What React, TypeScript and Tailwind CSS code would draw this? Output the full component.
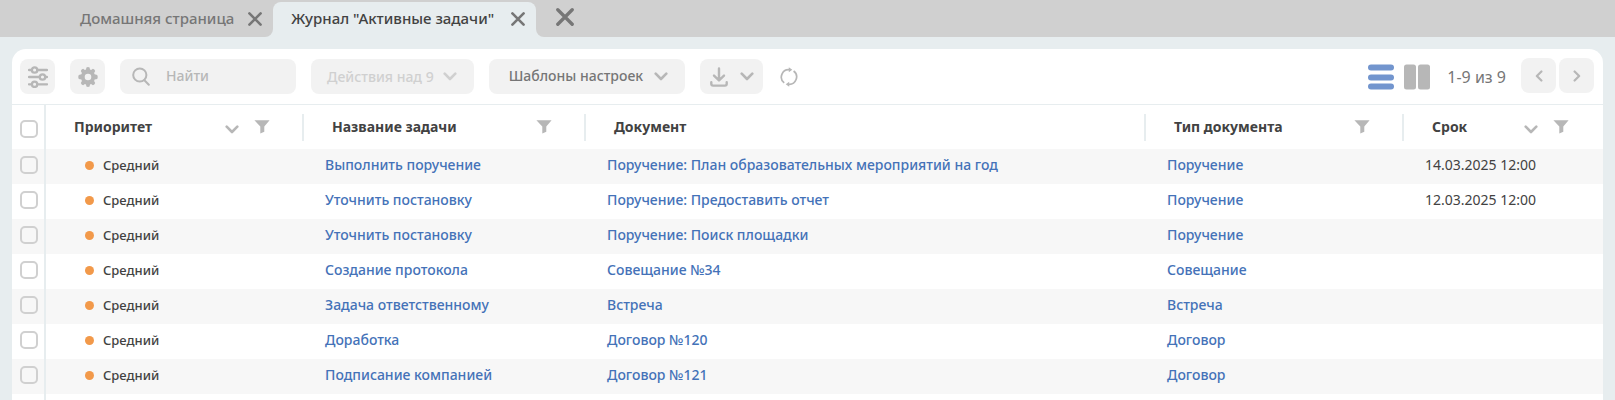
import type { ReactNode } from "react";

const tasks = [
  { name: "Выполнить поручение", doc: "Поручение: План образовательных мероприятий на год", type: "Поручение", due: "14.03.2025 12:00" },
  { name: "Уточнить постановку", doc: "Поручение: Предоставить отчет", type: "Поручение", due: "12.03.2025 12:00" },
  { name: "Уточнить постановку", doc: "Поручение: Поиск площадки", type: "Поручение", due: "" },
  { name: "Создание протокола", doc: "Совещание №34", type: "Совещание", due: "" },
  { name: "Задача ответственному", doc: "Встреча", type: "Встреча", due: "" },
  { name: "Доработка", doc: "Договор №120", type: "Договор", due: "" },
  { name: "Подписание компанией", doc: "Договор №121", type: "Договор", due: "" },
];

const columns = [
  { title: "Приоритет", sort: true, filter: true },
  { title: "Название задачи", sort: false, filter: true },
  { title: "Документ", sort: false, filter: false },
  { title: "Тип документа", sort: false, filter: true },
  { title: "Срок", sort: true, filter: true },
];

function Cross({ className }: { className: string }) {
  return (
    <svg viewBox="0 0 14 14" className={className} fill="none" stroke="currentColor" strokeWidth="2.6" strokeLinecap="round" aria-hidden="true">
      <path d="M1.4 1.4 12.6 12.6M12.6 1.4 1.4 12.6" />
    </svg>
  );
}

function Chevron({ className = "h-[9px] w-[14px]" }: { className?: string }) {
  return (
    <svg viewBox="0 0 14 9" className={`shrink-0 ${className}`} fill="none" stroke="currentColor" strokeWidth="2.6" strokeLinecap="round" strokeLinejoin="round" aria-hidden="true">
      <path d="M1.7 1.7 7 7l5.3-5.3" />
    </svg>
  );
}

function Funnel() {
  return (
    <svg viewBox="0 0 16 14" className="h-[14px] w-4" fill="currentColor" aria-hidden="true">
      <path d="M.4.3h15.2L10.3 6.4v5.4l-4 1.8V6.4z" />
    </svg>
  );
}

function Sliders() {
  return (
    <svg viewBox="0 0 20 22" className="h-[22px] w-5" fill="none" stroke="currentColor" strokeWidth="2.3" strokeLinecap="round" aria-hidden="true">
      <path d="M1 4h2.6M9.5 4H19M1 11h10.5M17.4 11H19M1 18.3h2.6M9.5 18.3H19" />
      <circle cx="6.6" cy="4" r="2.7" />
      <circle cx="14.5" cy="11" r="2.7" />
      <circle cx="6.6" cy="18.3" r="2.7" />
    </svg>
  );
}

function Gear() {
  return (
    <svg viewBox="0 0 20 20" className="size-5" fill="currentColor" aria-hidden="true">
      <path
        fillRule="evenodd"
        d="M8.4.5Q10-.3 11.6.5l.4 2 1.1.5 1.8-1.2q1.7.4 2.3 2.3L16.1 6l.5 1.3 2.6.7q1 2 0 4l-2.6.6-.5 1.3 1.1 2q-.6 1.8-2.3 2.3l-1.8-1.2-1.1.5-.4 2q-1.6.8-3.200 0l-.4-2-1.100-.5-1.800 1.200q-1.700-.5-2.300-2.300l1.100-2-.5-1.300L.8 12q-1-2 0-4l2.600-.7L3.900 6 2.800 4.100q.6-1.900 2.300-2.300L6.900 3 8 2.500zM10 6.700a3.300 3.300 0 1 0 0 6.600 3.300 3.300 0 0 0 0-6.600z"
      />
    </svg>
  );
}

function Magnifier() {
  return (
    <svg viewBox="0 0 18 19" className="h-[19px] w-[18px]" fill="none" stroke="currentColor" strokeWidth="2" strokeLinecap="round" aria-hidden="true">
      <circle cx="7.8" cy="8" r="6.6" />
      <path d="M12.4 13.2 16.8 17.8" />
    </svg>
  );
}

function Download() {
  return (
    <svg viewBox="0 0 18 20" className="h-5 w-[18px]" fill="none" stroke="currentColor" strokeWidth="2.4" strokeLinecap="round" strokeLinejoin="round" aria-hidden="true">
      <path d="M9 1.5V13M4 8.6l5 4.800 5-4.800M1.300 15.200v1.600q0 1.800 1.800 1.800h11.800q1.800 0 1.800-1.800v-1.600" />
    </svg>
  );
}

function Refresh() {
  return (
    <svg viewBox="0 0 18 20" className="h-5 w-[18px]" fill="none" stroke="currentColor" strokeWidth="1.7" aria-hidden="true">
      <path d="M4.2 15.9A7.4 7.4 0 0 1 9.300 2.700M13.600 4a7.400 7.400 0 0 1-5 13.300" />
      <path d="M8.800.3 12.300 2.800 8.800 5.300zM9.200 14.700 5.700 17.200l3.500 2.500z" fill="currentColor" stroke="none" />
    </svg>
  );
}

function IconButton({ label, children }: { label: string; children: ReactNode }) {
  return (
    <button type="button" aria-label={label} className="flex size-[35px] items-center justify-center rounded-lg bg-[#f2f2f2] text-[#b7b7b7]">
      {children}
    </button>
  );
}

function Tick({ label }: { label: string }) {
  return (
    <input
      type="checkbox"
      aria-label={label}
      className="ml-2 block size-[18px] appearance-none rounded-[5px] border-2 border-[#d0d0d0] checked:bg-[#7295ce]"
    />
  );
}

export default function App() {
  return (
    <div className="flex h-screen flex-col overflow-hidden bg-[#e7edef] font-['Noto_Sans',sans-serif] text-[#424242]">
      <header className="flex h-[37px] shrink-0 text-[15px] font-medium text-[#767676]">
        <div className="flex items-center gap-[14px] rounded-br-lg bg-[#d0d0d0] pr-[11px] pl-20">
          <a href="#home">Домашняя страница</a>
          <button type="button" aria-label="Закрыть вкладку">
            <Cross className="size-[14px]" />
          </button>
        </div>
        <div className="bg-[#d0d0d0] pt-[2px]">
          <div className="flex h-full items-center gap-[17px] rounded-t-lg bg-[#e7edef] pr-[11px] pb-[2px] pl-[18px]">
            <a href="#tasks" className="text-[#424242]">Журнал "Активные задачи"</a>
            <button type="button" aria-label="Закрыть вкладку">
              <Cross className="size-[14px]" />
            </button>
          </div>
        </div>
        <div className="flex flex-1 items-center rounded-bl-lg bg-[#d0d0d0] pb-1 pl-5">
          <button type="button" aria-label="Закрыть все вкладки">
            <Cross className="size-[18px]" />
          </button>
        </div>
      </header>

      <main className="mx-3 mt-3 flex-1 rounded-t-[14px] bg-white">
        <div className="flex h-14 items-center gap-[15px] border-b border-[#e7edef] px-2 text-sm font-medium">
          <IconButton label="Настройка колонок"><Sliders /></IconButton>
          <IconButton label="Настройки"><Gear /></IconButton>
          <label className="flex h-[35px] w-44 items-center gap-4 rounded-lg bg-[#f2f2f2] pl-3 text-[#b7b7b7]">
            <Magnifier />
            <input type="text" placeholder="Найти" aria-label="Найти" className="w-28 bg-transparent pb-[2px] outline-none placeholder:text-[#b7b7b7]" />
          </label>
          <button type="button" disabled className="flex h-[35px] items-center gap-[9px] rounded-lg bg-[#f2f2f2] pr-[17px] pl-4 text-[#d0d0d0]">
            Действия над 9
            <Chevron />
          </button>
          <button type="button" className="flex h-[35px] items-center gap-[11px] rounded-lg bg-[#f2f2f2] pr-[17px] pl-5 text-[#767676]">
            <span className="pb-[2px]">Шаблоны настроек</span>
            <span className="text-[#b7b7b7]"><Chevron /></span>
          </button>
          <button type="button" aria-label="Выгрузить" className="flex h-[35px] items-center gap-3 rounded-lg bg-[#f2f2f2] pr-[9px] pl-[10px] text-[#b7b7b7]">
            <Download />
            <Chevron />
          </button>
          <button type="button" aria-label="Обновить" className="ml-[2px] text-[#b7b7b7]"><Refresh /></button>

          <div className="ml-auto flex items-center">
            <button type="button" aria-label="Список" className="mr-[10px] text-[#7295ce]">
              <svg viewBox="0 0 26 26" className="size-[26px]" fill="currentColor" aria-hidden="true">
                <rect y="0.5" width="26" height="6" rx="3" />
                <rect y="10.5" width="26" height="6" rx="3" />
                <rect y="19.5" width="26" height="6" rx="3" />
              </svg>
            </button>
            <button type="button" aria-label="Колонки" className="mr-[17px] text-[#b7b7b7]">
              <svg viewBox="0 0 26 26" className="size-[26px]" fill="currentColor" aria-hidden="true">
                <rect y="0.5" width="12" height="25" rx="2.5" />
                <rect x="14" y="0.5" width="12" height="25" rx="2.5" />
              </svg>
            </button>
            <span className="mr-[15px] text-base font-normal text-[#767676]">1-9 из 9</span>
            <div className="flex gap-[3px] pr-[1px] pb-[2px]">
              <IconButton label="Назад"><Chevron className="h-2 w-3 rotate-90" /></IconButton>
              <IconButton label="Вперёд"><Chevron className="h-2 w-3 -rotate-90" /></IconButton>
            </div>
          </div>
        </div>

        <table className="w-full table-fixed border-separate border-spacing-0 text-left text-sm">
          <colgroup>
            <col className="w-[34px]" />
            <col className="w-[258px]" />
            <col className="w-[282px]" />
            <col />
            <col className="w-[258px]" />
            <col className="w-[199px]" />
          </colgroup>
          <thead>
            <tr className="h-11">
              <th className="border-r-2 border-[#e7edef] p-0 pt-[3px]"><Tick label="Выбрать все" /></th>
              {columns.map((c, i) => (
                <th key={c.title} className="p-0 font-bold">
                  <div className={`flex h-[27px] items-center pl-7 ${i < 4 ? "border-r-2 border-[#e7edef] pr-8" : "pr-[34px]"}`}>
                    <span className="flex-1 whitespace-nowrap">{c.title}</span>
                    <span className="flex items-center gap-[15px] text-[#b7b7b7]">
                      {c.sort && <button type="button" aria-label="Сортировать" className="pt-1"><Chevron /></button>}
                      {c.filter && <button type="button" aria-label="Фильтр"><Funnel /></button>}
                    </span>
                  </div>
                </th>
              ))}
            </tr>
          </thead>
          <tbody>
            {tasks.map((t, i) => (
              <tr key={i} className="h-[35px] odd:bg-[#f7f7f7]">
                <td className="border-r-2 border-[#e7edef] p-0 pb-1"><Tick label={t.name} /></td>
                <td className="p-0 pb-[2px] pl-[39px]">
                  <span className="flex items-center gap-[9px] text-[13px] font-medium">
                    <span className="size-[9px] rounded-full bg-[#f2994a]" />
                    Средний
                  </span>
                </td>
                <td className="p-0 pb-1 pl-[21px] font-medium text-[#4472b8]"><a href="#task">{t.name}</a></td>
                <td className="p-0 pb-1 pl-[21px] font-medium text-[#4472b8]"><a href="#doc">{t.doc}</a></td>
                <td className="p-0 pb-1 pl-[21px] font-medium text-[#4472b8]"><a href="#type">{t.type}</a></td>
                <td className="p-0 pb-1 pl-[21px]">{t.due}</td>
              </tr>
            ))}
            <tr className="h-[35px]">
              <td className="border-r-2 border-[#e7edef] p-0" />
              <td colSpan={5} />
            </tr>
          </tbody>
        </table>
      </main>
    </div>
  );
}
